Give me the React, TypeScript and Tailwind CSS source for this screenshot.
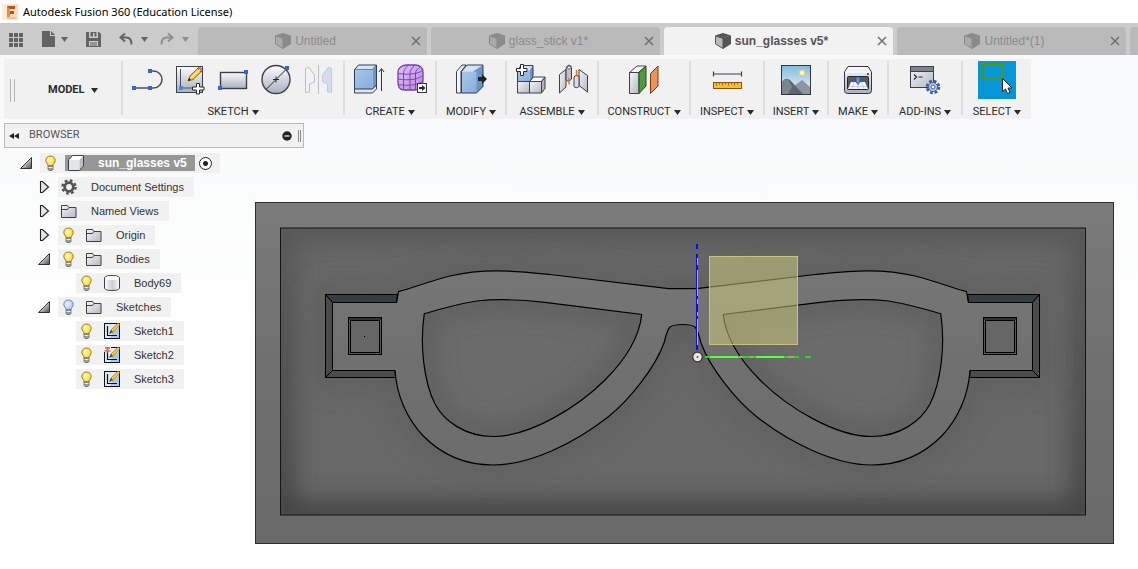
import React from 'react';
import clsx from 'clsx';

type IconProps = { children: React.ReactNode; size?: number; className?: string };

function Icon({ children, size = 32, className }: IconProps) {
  return (
    <svg
      width={size}
      height={size}
      viewBox={`0 0 ${size} ${size}`}
      fill="none"
      className={clsx('shrink-0', className)}
      aria-hidden="true"
    >
      {children}
    </svg>
  );
}

/* Gradients shared by the toolbar and tree icons */
function SharedDefs() {
  return (
    <svg width="0" height="0" className="absolute" aria-hidden="true">
      <defs>
        <linearGradient id="steel" x1="0" y1="0" x2="0" y2="1">
          <stop offset="0" stopColor="#fbfbfc" />
          <stop offset="1" stopColor="#a9b0bf" />
        </linearGradient>
        <linearGradient id="steelSide" x1="0" y1="0" x2="1" y2="1">
          <stop offset="0" stopColor="#f4f5f7" />
          <stop offset="1" stopColor="#b4b9c2" />
        </linearGradient>
        <linearGradient id="blueFace" x1="0" y1="0" x2="1" y2="1">
          <stop offset="0" stopColor="#a9c9ee" />
          <stop offset="1" stopColor="#86acd9" />
        </linearGradient>
        <linearGradient id="purple" x1="0" y1="0" x2="1" y2="1">
          <stop offset="0" stopColor="#e3c2f7" />
          <stop offset="1" stopColor="#b987e0" />
        </linearGradient>
        <linearGradient id="sky" x1="0" y1="0" x2="0" y2="1">
          <stop offset="0" stopColor="#84bbdc" />
          <stop offset="1" stopColor="#eef7fb" />
        </linearGradient>
        <linearGradient id="cylinder" x1="0" y1="0" x2="1" y2="0">
          <stop offset="0" stopColor="#ffffff" />
          <stop offset="0.55" stopColor="#c9ccd2" />
          <stop offset="1" stopColor="#ffffff" />
        </linearGradient>
        <linearGradient id="wedge" x1="0" y1="0" x2="1" y2="1">
          <stop offset="0.3" stopColor="#eeeeee" />
          <stop offset="1" stopColor="#4a4a4a" />
        </linearGradient>
        <radialGradient id="bulbOn" cx="0.4" cy="0.4" r="0.7">
          <stop offset="0" stopColor="#fffbc0" />
          <stop offset="1" stopColor="#f4d024" />
        </radialGradient>
        <radialGradient id="bulbOff" cx="0.4" cy="0.4" r="0.7">
          <stop offset="0" stopColor="#eef4ff" />
          <stop offset="1" stopColor="#9dbcf3" />
        </radialGradient>
      </defs>
    </svg>
  );
}

function Caret({ className }: { className?: string }) {
  return (
    <svg width="7" height="5" viewBox="0 0 7 5" className={clsx('shrink-0', className)} aria-hidden="true">
      <path d="M0 0h7L3.5 5z" fill="currentColor" />
    </svg>
  );
}

/* ---------- toolbar icons ---------- */

const Node = ({ x, y }: { x: number; y: number }) => (
  <rect x={x - 2} y={y - 2} width="4" height="4" fill="#2f66d0" />
);

const LineIcon = () => (
  <Icon>
    <path d="M19 7h3.500a8.500 8.500 0 0 1 0 17H3" stroke="#4b4f57" strokeWidth="1.500" />
    <Node x={19} y={7} />
    <Node x={3} y={24} />
    <Node x={19} y={24} />
  </Icon>
);

const NewSketchIcon = () => (
  <Icon>
    <rect x="2.500" y="2.500" width="26" height="26" fill="url(#steel)" stroke="#3c4048" />
    <path d="M6.500 5v19H22" stroke="#4b4f57" />
    <rect x="5" y="22" width="4" height="4" fill="#3f8af0" />
    <path d="M14 17l2-5L25 3l3.500 3.500L19 15.500z" fill="#f5c63b" stroke="#6b4a12" strokeWidth="0.800" />
    <path d="M23.500 4.500L25.500 2.500l3.500 3.500-2 2z" fill="#c98257" stroke="#6b4a12" strokeWidth="0.600" />
    <path d="M17 14L26 5.500" stroke="#fdeaa6" strokeWidth="1.200" />
    <path d="M14 17l1-3 2 2z" fill="#222" />
    <path d="M22.500 19.500h3v3.500H30v3h-4.500v4h-3v-4H18.500v-3h4z" fill="#fff" stroke="#26282c" />
  </Icon>
);

const RectangleIcon = () => (
  <Icon>
    <rect x="3.500" y="8.500" width="26" height="16" fill="url(#steel)" stroke="#3c4048" strokeWidth="1.400" />
    <Node x={29} y={8} />
    <Node x={3} y={24} />
  </Icon>
);

const CircleIcon = () => (
  <Icon>
    <circle cx="16" cy="15.500" r="14" fill="url(#steel)" stroke="#3c4048" strokeWidth="1.400" />
    <path d="M6 25.500L27 4.500M13 15.500h6M16 12.500v6" stroke="#26282c" />
    <Node x={27} y={4} />
  </Icon>
);

const MirrorIcon = () => (
  <Icon className="opacity-40">
    <path d="M2.500 4.500l3-1.500 6 8v7l-5 2v8l-4 .5z" fill="#f4f5f8" stroke="#6f7684" />
    <path d="M15.500 1v29" stroke="#6f7684" />
    <path d="M28.500 4.500l-3-1.500-6 8v7l5 2v8l4 .5z" fill="#a9c4ec" stroke="#8295b3" />
  </Icon>
);

const ExtrudeIcon = () => (
  <Icon>
    <path d="M1.500 24.500h18l4-4v4.500l-4 4h-18z" fill="#e2e4e8" stroke="#3c4048" />
    <path d="M1.500 5.500l4-4.500h18l-4 4.500z" fill="#d4e4f7" stroke="#2e3f58" />
    <path d="M19.500 5.500l4-4.500v20l-4 4z" fill="#6d94c4" />
    <path d="M1.500 5.500h18v19.500h-18z" fill="url(#blueFace)" />
    <path d="M1.500 5.500V25h18l4-4V1" stroke="#2e3f58" />
    <path d="M28.500 27V5M26 8l2.500-3.500L31 8" stroke="#33363b" />
  </Icon>
);

const FormIcon = () => (
  <Icon>
    <path d="M2 8c0-4 4-7 9-7h8c5 0 8 3 8 7v9c0 5-4 9-8 9H9c-5 0-7-3-7-7z" fill="url(#purple)" stroke="#6f3fae" strokeWidth="1.300" />
    <path
      d="M2 9.500c6 1 11 1 17 0 4-1 7-2 8-4M2 15c6 1 12 1 17 0 4-1 6-2 8-4M2 20.500c6 1 12 1 17 0 4-1 6-2 8-4M7.500 26V10c0-4 2-6 5-9M14 26V10c0-4 2-6 5-9M19.500 26V10c0-4 2-5 5-7"
      stroke="#7a46b5"
    />
    <rect x="21.500" y="19.500" width="9" height="9" fill="#fff" stroke="#33363b" />
    <path d="M23 23h3v-2l3.500 3-3.500 3v-2h-3z" fill="#26282c" />
  </Icon>
);

const PressPullIcon = () => (
  <Icon>
    <path d="M1.500 7.500L7 1h4L6 7.500v21.500H1.500z" fill="#f3f4f6" stroke="#3c4048" />
    <path d="M6.500 7.500L12 1h16l-5.500 6.500z" fill="#d4e4f7" />
    <path d="M18 7.500L28 1v21.500L21.500 29H18z" fill="#6d94c4" />
    <path d="M6.500 7.500h15V29h-15z" fill="url(#blueFace)" />
    <path d="M6.500 7.500L12 1h16v21.500L21.500 29h-15z" stroke="#2e3f58" />
    <path d="M23 13h4v-3l5 5-5 5v-3h-4z" fill="#222" />
  </Icon>
);

const NewComponentIcon = () => (
  <Icon>
    <path d="M2.500 6.500L6 1.500h12l-3.500 5z" fill="#d4e4f7" />
    <path d="M14.500 6.500l3.500-5v12l-3.500 4z" fill="#6d94c4" />
    <path d="M2.500 6.500h12v11h-12z" fill="url(#blueFace)" />
    <path d="M2.500 6.500L6 1.500h12v12l-3.500 4h-12z" stroke="#2e3f58" />
    <path d="M2.500 17.500h12v11.500h-12z" fill="url(#steelSide)" stroke="#3c4048" />
    <path d="M14.500 17.500l4-4.500H30l-3.500 4.500z" fill="#fafafa" stroke="#3c4048" />
    <path d="M26.500 17.500L30 13v11.500L26.500 29z" fill="#aeb3bd" stroke="#3c4048" />
    <path d="M14.500 17.500h12V29h-12z" fill="url(#steelSide)" stroke="#3c4048" />
    <path d="M5.500 0.500h3v4H12v3H8.500v4h-3v-4H1.500v-3h4z" fill="#fff" stroke="#26282c" />
  </Icon>
);

const JointIcon = () => (
  <Icon>
    <path d="M1.500 10.500L8 5.500V23l-6.500 6z" fill="url(#steelSide)" stroke="#3c4048" />
    <path d="M8 5.500c0-5 5-5.500 5.500-2V15c-1.500 2.500-4 2.500-5.500 1z" fill="#b9bec8" stroke="#3c4048" />
    <circle cx="11" cy="3.500" r="1.500" fill="#fff" stroke="#3c4048" strokeWidth="0.700" />
    <path d="M21 5.500l8.500 6V28L21 21.500z" fill="url(#steelSide)" stroke="#3c4048" />
    <path d="M16 13c1-2 4-2 5-.5v10c-1.500 1.500-4 1.500-5 0z" fill="#d9dce2" stroke="#3c4048" />
    <path d="M11 20.500V14M18.500 6v6.500" stroke="#f0701c" strokeWidth="1.400" />
  </Icon>
);

const PlaneIcon = () => (
  <Icon>
    <path d="M1.500 8.500L9 2h9l-7.500 6.500z" fill="#fafafa" stroke="#3c4048" />
    <path d="M1.500 8.500h9.500v21H1.500z" fill="url(#steelSide)" stroke="#3c4048" />
    <path d="M11 8.500L18 2v20l-7 7.500z" fill="#4f9a3f" stroke="#1f4d1a" />
    <path d="M22.500 9.500L30 2v20l-7.500 7.500z" fill="#e8935f" stroke="#83350c" />
  </Icon>
);

const MeasureIcon = () => (
  <Icon>
    <path d="M2.500 7.500v5M30.500 7.500v5M2.500 10h28" stroke="#3c4048" strokeWidth="1.200" />
    <rect x="2.500" y="18.500" width="28" height="6" fill="#f2c230" stroke="#8a5510" />
    <path d="M5.500 19v2.500M8.500 19v1.500M11.500 19v2.500M14.500 19v1.500M17.500 19v2.500M20.500 19v1.500M23.500 19v2.500M26.500 19v1.500" stroke="#8a5510" strokeWidth="0.800" />
  </Icon>
);

const PictureIcon = () => (
  <Icon>
    <rect x="1.500" y="1.500" width="29" height="29" fill="url(#sky)" stroke="#33363b" />
    <circle cx="22" cy="9" r="2.700" fill="#fffbe0" stroke="#f2cf6b" strokeWidth="1.200" />
    <path d="M14 22l8-6 8 7v7H14z" fill="#8e94a0" />
    <path d="M2 18c3-4 5-4 8-2l13 14H2z" fill="#5f6573" />
    <path d="M8 15l4 8-4 7H2V18c2-2 4-3 6-3z" fill="#7d8492" />
  </Icon>
);

const PrinterIcon = () => (
  <Icon>
    <path d="M2.500 8L6 2.500h20L29.500 8v18.500q0 3-3 3h-21q-3 0-3-3z" fill="url(#steel)" stroke="#33363b" />
    <path d="M3 8h26" stroke="#fff" />
    <rect x="25" y="9" width="2" height="2" fill="#128a2c" />
    <rect x="5.500" y="12.500" width="21" height="13" rx="1" fill="#555a64" stroke="#26282c" />
    <path d="M9 18h14l3 7H6z" fill="#f3f4f6" />
    <path d="M12 18l-2 7M16 20v5M20 18l2 7M7 22.500h18" stroke="#b9bdc6" strokeWidth="0.600" />
    <path d="M14 13h4v5l-2 2.500-2-2.500z" fill="#5a9be0" stroke="#1f4f91" strokeWidth="0.800" />
  </Icon>
);

const ScriptsIcon = () => (
  <Icon>
    <rect x="1.500" y="2.500" width="23" height="21" fill="url(#steelSide)" stroke="#3c4048" />
    <rect x="2" y="3" width="22" height="4" fill="#7c8492" />
    <path d="M2 7.500h22" stroke="#3c4048" />
    <path d="M5 10.500l2.500 2.500L5 15.500M9.500 13h4" stroke="#26282c" strokeWidth="1.200" />
    <circle cx="24" cy="23" r="5.500" stroke="#3f5f93" strokeWidth="3.500" strokeDasharray="2.600 1.720" />
    <circle cx="24" cy="23" r="4.500" fill="#b9cdeb" stroke="#3f5f93" />
    <circle cx="24" cy="23" r="2" fill="#fff" stroke="#3f5f93" />
  </Icon>
);

const SelectIcon = () => (
  <Icon size={38} className="bg-[#0696d7]">
    <rect x="4.500" y="3.500" width="20" height="14" stroke="#4e9a06" strokeWidth="1.500" />
    <path d="M24.500 17.500v13l3-2.500 2 4.500 2.500-1-2-4.500h4z" fill="#fff" stroke="#26282c" />
  </Icon>
);

/* ---------- header icons ---------- */

const GridIcon = () => (
  <Icon size={15}>
    <path d="M0 1h4v4H0zM5 1h4v4H5zM10 1h4v4h-4zM0 6h4v4H0zM5 6h4v4H5zM10 6h4v4h-4zM0 11h4v4H0zM5 11h4v4H5zM10 11h4v4h-4z" fill="#636363" />
  </Icon>
);

const FileIcon = () => (
  <Icon size={16}>
    <path d="M1 0h8v5h5v11H1z" fill="#636363" />
    <path d="M10 0l4 4h-4z" fill="#636363" />
  </Icon>
);

const SaveIcon = () => (
  <Icon size={15}>
    <path fillRule="evenodd" d="M0 0h3v6h9V0h1l2 2v13H0zM3 9v5h9V9z" fill="#636363" />
    <path d="M4.500 0h6v4.500h-2V1h-1.500v3.500H4.500zM4 10.500h7v1H4zM4 12.500h7v1H4z" fill="#636363" />
  </Icon>
);

const UndoIcon = ({ flip }: { flip?: boolean }) => (
  <Icon size={14} className={clsx(flip && '-scale-x-100')}>
    <path d="M6 1.500L1.500 5.500 6 9.500M2 5.500h5.500c3.500 0 5 2.500 5 7" stroke="currentColor" strokeWidth="2" />
  </Icon>
);

const CubeIcon = () => (
  <Icon size={16}>
    <path d="M0 2.500L8 0l8 2.500-8 2.800z" fill="currentColor" />
    <path d="M8 5l8-2.500V11l-8 5z" fill="currentColor" />
    <path d="M.5 3L8 5.500v10L.5 11z" fill="currentColor" fillOpacity="0.350" stroke="currentColor" />
  </Icon>
);

const FusionLogo = () => (
  <Icon size={16}>
    <rect width="16" height="16" fill="#fbdcc4" />
    <path d="M0 0h5v16H0z" fill="#fdebdc" />
    <path d="M5 13h9v2H5z" fill="#f6c39c" />
    <path d="M5 2h8v3H8v2h4v3H8v3H5z" fill="#b9531c" />
    <path d="M5 2l3 3v8H5z" fill="#ee8b42" />
  </Icon>
);

/* ---------- tree icons ---------- */

function Bulb({ off }: { off?: boolean }) {
  return (
    <svg width="11" height="16" viewBox="0 0 11 16" aria-hidden="true">
      <path
        d="M5.500 1c3 0 4.700 2 4.700 4.500C10.200 8 8 8.500 8 11H3C3 8.500.8 8 .8 5.500.8 3 2.500 1 5.500 1z"
        fill={off ? 'url(#bulbOff)' : 'url(#bulbOn)'}
        stroke={off ? '#6f87b8' : '#a67b12'}
      />
      <path d="M3 11h5v3.500l-1 1H4l-1-1z" fill="#9b9b9b" stroke="#5c5c5c" strokeWidth="0.700" />
      <path d="M3.500 12.500h4" stroke="#eee" />
    </svg>
  );
}

const FolderIcon = () => (
  <Icon size={16}>
    <path d="M.5 14.500v-12h6l1.500 2h7v10z" fill="url(#steelSide)" stroke="#3c4048" />
    <path d="M1 6.500h5.500l1.500-2" stroke="#3c4048" />
  </Icon>
);

const GearIcon = () => (
  <Icon size={16}>
    <circle cx="8" cy="8" r="6.500" stroke="#555" strokeWidth="2.500" strokeDasharray="2.700 2.405" />
    <circle cx="8" cy="8" r="4.300" stroke="#555" strokeWidth="2.800" />
  </Icon>
);

const BodyIcon = () => (
  <Icon size={16}>
    <path d="M.5 3C.5 1.500 3 .5 8 .5s7.500 1 7.500 2.500v10c0 1.500-2.500 2.500-7.500 2.500S.5 14.500.5 13z" fill="url(#cylinder)" stroke="#3c4048" />
    <ellipse cx="8" cy="3" rx="6.500" ry="2" fill="#fdfdfd" />
  </Icon>
);

const ComponentIcon = () => (
  <Icon size={16}>
    <path d="M.5 5L4.500.5h11V11l-4 4.500H.5z" fill="#fff" />
    <path d="M.5 5h11v10.500H.5z" fill="#e3e5e9" />
    <path d="M11.500 5l4-4.500V11l-4 4.500z" fill="#b8bcc4" />
    <path d="M.5 5L4.500.5h11V11l-4 4.500H.5z" stroke="#3c4048" />
  </Icon>
);

const SketchIcon = ({ pinned }: { pinned?: boolean }) => (
  <Icon size={16}>
    <rect x="0.500" y="0.500" width="15" height="15" fill="#dcebfa" stroke="#111" />
    <path d="M9 9l6-5v11H6z" fill="#a9c9ea" />
    <path d="M3.500 3v9.500H13" stroke="#111" strokeWidth="1.200" />
    <path d="M5.500 10.500L7 7l7-7 2 1.500L9 9.500z" fill="#f5c63b" stroke="#7a5714" strokeWidth="0.500" />
    <path d="M5.500 10.500L7 7l2 2z" fill="#444" />
    {pinned && (
      <>
        <path d="M0 0h7v5H0z" fill="#f1f1f1" />
        <path d="M1 .8h5M.5 4h6" stroke="#c23a1c" strokeWidth="1.200" />
        <path d="M2.500 1h2v3h-2z" fill="#e8694a" />
        <path d="M3.500 4.500V7" stroke="#8a2a14" />
      </>
    )}
  </Icon>
);

const TriangleOpen = () => (
  <Icon size={12}>
    <path d="M.5 11.500h11v-11z" fill="url(#wedge)" stroke="#222" strokeWidth="0.900" />
  </Icon>
);

const TriangleClosed = () => (
  <Icon size={12}>
    <path d="M2.500.5h2L10.500 6l-6 5.500h-2z" fill="#e4e4e4" stroke="#222" strokeWidth="1.100" />
  </Icon>
);

/* ---------- data ---------- */

const TABS = [
  { id: 1, title: 'Untitled' },
  { id: 2, title: 'glass_stick v1*' },
  { id: 3, title: 'sun_glasses v5*' },
  { id: 4, title: 'Untitled*(1)' },
];

const GROUPS = [
  {
    label: 'SKETCH',
    width: 'w-[220px]',
    tools: [
      { name: 'Line', icon: <LineIcon /> },
      { name: 'Create Sketch', icon: <NewSketchIcon /> },
      { name: 'Rectangle', icon: <RectangleIcon /> },
      { name: 'Circle', icon: <CircleIcon /> },
      { name: 'Mirror', icon: <MirrorIcon /> },
    ],
  },
  {
    label: 'CREATE',
    width: 'w-[90px]',
    tools: [
      { name: 'Extrude', icon: <ExtrudeIcon /> },
      { name: 'Create Form', icon: <FormIcon /> },
    ],
  },
  { label: 'MODIFY', width: 'w-[68px]', tools: [{ name: 'Press Pull', icon: <PressPullIcon /> }] },
  {
    label: 'ASSEMBLE',
    width: 'w-[90px]',
    tools: [
      { name: 'New Component', icon: <NewComponentIcon /> },
      { name: 'Joint', icon: <JointIcon /> },
    ],
  },
  { label: 'CONSTRUCT', width: 'w-[90px]', tools: [{ name: 'Offset Plane', icon: <PlaneIcon /> }] },
  { label: 'INSPECT', width: 'w-[72px]', tools: [{ name: 'Measure', icon: <MeasureIcon /> }] },
  { label: 'INSERT', width: 'w-[62px]', tools: [{ name: 'Attached Canvas', icon: <PictureIcon /> }] },
  { label: 'MAKE', width: 'w-[58px]', tools: [{ name: '3D Print', icon: <PrinterIcon /> }] },
  { label: 'ADD-INS', width: 'w-[72px]', tools: [{ name: 'Scripts and Add-Ins', icon: <ScriptsIcon /> }] },
  { label: 'SELECT', width: 'w-[68px]', tools: [{ name: 'Select', icon: <SelectIcon /> }] },
];

type TreeItem = {
  label: string;
  icon: React.ReactNode;
  bulb?: 'on' | 'off';
  state?: 'open' | 'closed';
  children?: TreeItem[];
};

const TREE: TreeItem[] = [
  { label: 'Document Settings', icon: <GearIcon />, state: 'closed' },
  { label: 'Named Views', icon: <FolderIcon />, state: 'closed' },
  { label: 'Origin', icon: <FolderIcon />, bulb: 'on', state: 'closed' },
  {
    label: 'Bodies',
    icon: <FolderIcon />,
    bulb: 'on',
    state: 'open',
    children: [{ label: 'Body69', icon: <BodyIcon />, bulb: 'on' }],
  },
  {
    label: 'Sketches',
    icon: <FolderIcon />,
    bulb: 'off',
    state: 'open',
    children: [
      { label: 'Sketch1', icon: <SketchIcon />, bulb: 'on' },
      { label: 'Sketch2', icon: <SketchIcon pinned />, bulb: 'on' },
      { label: 'Sketch3', icon: <SketchIcon />, bulb: 'on' },
    ],
  },
];

/* ---------- layout ---------- */

function Header() {
  const [active, setActive] = React.useState(3);

  return (
    <header>
      <div className="flex h-[23px] items-center gap-[5px] bg-white pl-0.5">
        <FusionLogo />
        <h1 className="font-['Noto_Sans',sans-serif] text-[11px] leading-4 text-black">
          Autodesk Fusion 360 (Education License)
        </h1>
      </div>
      <div className="flex h-8 items-stretch overflow-hidden bg-[#cbcbcb] text-[#636363]">
        <div className="flex w-[198px] shrink-0 items-center pl-[9px]">
          <button aria-label="Show data panel" className="mr-[17px]">
            <GridIcon />
          </button>
          <button aria-label="File" className="mr-[18px] flex items-center gap-1">
            <FileIcon />
            <Caret />
          </button>
          <button aria-label="Save" className="mr-[18px]">
            <SaveIcon />
          </button>
          <button aria-label="Undo" className="mr-3 flex items-center gap-2">
            <UndoIcon />
            <Caret />
          </button>
          <button aria-label="Redo" className="flex items-center gap-2 text-[#8f8f8f]">
            <UndoIcon flip />
            <Caret />
          </button>
        </div>
        <nav className="flex min-w-0 flex-1 gap-1 overflow-hidden pt-1">
          {TABS.map((tab) => (
            <div
              key={tab.id}
              className={clsx(
                'flex w-[229px] shrink-0 items-center rounded-t pl-0.5 text-[12px]',
                tab.id === active ? 'bg-[#f2f2f2] font-bold text-[#555]' : 'bg-[#bababa] text-[#8b8b8b]'
              )}
            >
              <button
                onClick={() => setActive(tab.id)}
                className="flex flex-1 items-center justify-center gap-1"
              >
                <CubeIcon />
                {tab.title}
              </button>
              <button aria-label={`Close ${tab.title}`} className="mr-1.5 text-[#6f6f6f]">
                <Icon size={10}>
                  <path d="M1 1l8 8M9 1L1 9" stroke="currentColor" strokeWidth="1.500" />
                </Icon>
              </button>
            </div>
          ))}
          <div className="w-[229px] shrink-0 rounded-t bg-[#bababa]" />
        </nav>
      </div>
    </header>
  );
}

function Toolbar() {
  return (
    <div className="flex h-[60px] w-max bg-[#f1f1f1] pt-0.5 font-['Roboto',sans-serif] text-[11px] text-[#2b2b2b]">
      <div className="flex w-[117px] items-center pl-1.5">
        <span className="h-[23px] w-[5px] border-x border-[#b4b4b4]" />
        <label className="ml-[33px] flex items-center gap-[3px] font-bold">
          <select aria-label="Workspace" className="w-10 appearance-none bg-transparent">
            <option>MODEL</option>
            <option>PATCH</option>
            <option>SCULPT</option>
          </select>
          <Caret />
        </label>
      </div>
      {GROUPS.map((group) => (
        <React.Fragment key={group.label}>
          <span className="h-[54px] w-0.5 bg-[#dedede]" />
          <div className={clsx('flex flex-col items-center', group.width)}>
            <div className="flex h-[38px] shrink-0 items-center gap-[11px]">
              {group.tools.map((tool) => (
                <button key={tool.name} aria-label={tool.name}>
                  {tool.icon}
                </button>
              ))}
            </div>
            <button className="mt-1.5 flex h-3.5 items-center gap-[3px]">
              {group.label}
              <Caret />
            </button>
          </div>
        </React.Fragment>
      ))}
    </div>
  );
}

function TreeNode({ item }: { item: TreeItem }) {
  return (
    <li>
      <div className="flex h-6 items-center gap-2">
        {item.state ? (
          <button aria-label={`Toggle ${item.label}`}>
            {item.state === 'open' ? <TriangleOpen /> : <TriangleClosed />}
          </button>
        ) : (
          <span className="w-3" />
        )}
        <div className="flex h-5 items-center bg-[#f1f1f1] pr-2.5 pl-[3px]">
          {item.bulb && (
            <button aria-label={`Show or hide ${item.label}`} className="mr-3 ml-0.5">
              <Bulb off={item.bulb === 'off'} />
            </button>
          )}
          {item.icon}
          <span className="ml-3.5">{item.label}</span>
        </div>
      </div>
      {item.children && (
        <ul className="pl-[18px]">
          {item.children.map((child) => (
            <TreeNode key={child.label} item={child} />
          ))}
        </ul>
      )}
    </li>
  );
}

function Browser() {
  return (
    <aside className="w-[300px] text-[11px] text-[#333]">
      <div className="flex h-[25px] items-center border border-[#b9b9b9] bg-[#f1f1f1] pr-0.5 pl-1">
        <button aria-label="Collapse browser" className="mr-2.5">
          <svg width="10" height="6" viewBox="0 0 10 6" aria-hidden="true">
            <path d="M5 0v6L0 3zM10 0v6L5 3z" fill="#222" />
          </svg>
        </button>
        <h2 className="flex-1 font-['Roboto',sans-serif] text-[#555]">BROWSER</h2>
        <button aria-label="Hide browser">
          <Icon size={10}>
            <circle cx="5" cy="5" r="4.700" fill="#222" />
            <path d="M2.500 5h5" stroke="#fff" strokeWidth="1.200" />
          </Icon>
        </button>
        <span className="ml-1.5 h-3 w-[3px] border-x border-[#8a8a8a]" />
      </div>
      <ul className="mt-[3px] pl-4">
        <li>
          <div className="flex h-6 items-center gap-2">
            <button aria-label="Toggle sun_glasses v5">
              <TriangleOpen />
            </button>
            <div className="flex h-5 items-center bg-[#f1f1f1] pr-2 pl-[5px]">
              <button aria-label="Show or hide sun_glasses v5" className="mr-[9px]">
                <Bulb />
              </button>
              <div className="flex h-4 items-center bg-[#979797] pr-2 pl-[3px]">
                <ComponentIcon />
                <label htmlFor="activate" className="ml-3.5 text-[12px] leading-4 font-bold text-white">
                  sun_glasses v5
                </label>
              </div>
              <input
                id="activate"
                type="radio"
                defaultChecked
                className="ml-1 size-[13px] appearance-none rounded-full border border-[#222] bg-white bg-[radial-gradient(circle,#222_0_2px,transparent_3px)]"
              />
            </div>
          </div>
          <ul className="pl-[18px]">
            {TREE.map((item) => (
              <TreeNode key={item.label} item={item} />
            ))}
          </ul>
        </li>
      </ul>
    </aside>
  );
}

/* Left half of the frame; the right half is the same drawing mirrored about x = 682.5 */
const FRAME_TOP = 'M396.500 302.500L398.500 291.700C415 287 432 280.500 450 276C468 271.500 483 270.800 497 270.800C515 270.800 535 273 550 274.500L668.500 288.700H683';
const FRAME_BOTTOM = 'M395 370.500C396.500 394 406 418 423.300 436C441 454 465 465 493.300 465C530 465 575 443 608 417C629 400.500 655 368 664 343C666 336 667 330 670 327C673 325 678 324.500 683 324.500';
const FRAME_FILL =
  'M325.500 294.500H398L398.500 291.700C415 287 432 280.500 450 276C468 271.500 483 270.800 497 270.800C515 270.800 535 273 550 274.500L668.500 288.700H683V324.500C678 324.500 673 325 670 327C667 330 666 336 664 343C655 368 629 400.500 608 417C575 443 530 465 493.300 465C465 465 441 454 423.300 436C406 418 398 398 395.500 377.500H325.500Z';
const LENS =
  'M424.300 313.700C440 309 458 304 476.700 301C495 299 520 299.500 545 302.300L641.700 314.500C639 340 624 361 605 380C578 407 530 436.500 493.300 436.500C465 436.500 444 421 435 404C424 382 419.500 345 424.300 313.700Z';

function FrameHalf() {
  return (
    <>
      <path d={FRAME_FILL} fill="url(#face)" />
      <path d={LENS} fill="#6b6b6b" />
      <g clipPath="url(#lensClip)">
        <path d={LENS} fill="none" stroke="#565656" strokeWidth="20" strokeOpacity="0.650" filter="url(#soft)" />
      </g>
      <g stroke="#000" fill="none">
        <path d="M325.500 294.500H397.500L396.500 302.500H332.500Z" fill="#343d42" />
        <path d="M325.500 294.500L332.500 302.500V370.500L325.500 377.500Z" fill="#4a4a48" />
        <path d="M325.500 377.500L332.500 370.500H395L395.500 377.500Z" fill="#4b4b49" />
        <rect x="348.500" y="317.500" width="33" height="37" fill="#5a5a5a" />
        <path d="M349 318h32v2h-32z" fill="#303030" stroke="none" />
        <rect x="350.500" y="320.500" width="29" height="32" fill="#666" />
        <path d={FRAME_TOP} strokeWidth="1.200" />
        <path d={FRAME_BOTTOM} strokeWidth="1.200" />
        <path d={LENS} strokeWidth="1.200" />
      </g>
    </>
  );
}

function Viewport() {
  return (
    <svg viewBox="255 202 859 342" className="block h-auto w-full" role="img" aria-label="Sunglasses mould, top view">
      <defs>
        <linearGradient id="face" gradientUnits="userSpaceOnUse" x1="0" y1="202" x2="0" y2="544">
          <stop offset="0" stopColor="#7b7b7b" />
          <stop offset="0.450" stopColor="#707070" />
          <stop offset="1" stopColor="#6a6a6a" />
        </linearGradient>
        <linearGradient id="pocketEdge" gradientUnits="userSpaceOnUse" x1="0" y1="228" x2="0" y2="515">
          <stop offset="0" stopColor="#555555" />
          <stop offset="1" stopColor="#404040" />
        </linearGradient>
        <filter id="soft" filterUnits="userSpaceOnUse" x="255" y="202" width="859" height="342">
          <feGaussianBlur stdDeviation="13" />
        </filter>
        <clipPath id="pocketClip">
          <rect x="280" y="228" width="806" height="287" />
        </clipPath>
        <clipPath id="lensClip">
          <path d={LENS} />
        </clipPath>
      </defs>
      <rect x="255.500" y="202.500" width="858" height="341" fill="url(#face)" stroke="#2d2d2d" />
      <g clipPath="url(#pocketClip)">
        <rect x="280" y="228" width="806" height="287" fill="#686868" />
        <rect x="280" y="228" width="806" height="287" fill="none" stroke="url(#pocketEdge)" strokeWidth="26" filter="url(#soft)" />
        <g stroke="#585858" strokeWidth="22" fill="none" strokeOpacity="0.600" filter="url(#soft)">
          <path d={FRAME_FILL} />
          <path d={FRAME_FILL} transform="matrix(-1 0 0 1 1365 0)" />
        </g>
      </g>
      <rect x="280.500" y="228" width="805" height="287" fill="none" stroke="#151515" />
      <FrameHalf />
      <g transform="matrix(-1 0 0 1 1365 0)">
        <FrameHalf />
      </g>
      <rect x="364" y="336" width="1" height="1" fill="#000" />

      <rect x="709.500" y="256.500" width="88" height="88" fill="#d4d27e" fillOpacity="0.500" stroke="#c5c183" />
      <path d="M697 244v5M697 254v96" stroke="#0a0af0" strokeWidth="2" />
      <path d="M697.500 258v7M697.500 270v26M697.500 299v5M697.500 312v4M697.500 319v26" stroke="#b9b4d0" />
      <path d="M705 357h94M805 357h6" stroke="#16e016" strokeWidth="2" />
      <path d="M710 357h28M756 357h28" stroke="#5cff3c" strokeWidth="2" />
      <path d="M739 357h4M750 357h4M788 357h6" stroke="#b89a80" strokeWidth="2" />
      <circle cx="697.500" cy="357" r="4.800" fill="#e9e9e9" stroke="#3b3535" strokeWidth="1.300" />
      <circle cx="697.500" cy="357" r="1" fill="#e02020" />
    </svg>
  );
}

export default function App() {
  return (
    <div className="flex min-h-screen flex-col font-['Liberation_Sans',Arial,sans-serif]">
      <SharedDefs />
      <Header />
      <main className="grid flex-1 bg-linear-to-b from-[#f7f9fa] to-white to-60%">
        <section className="col-start-1 row-start-1 pt-[147px] pr-6 pb-6 pl-[255px]">
          <Viewport />
        </section>
        <div className="z-10 col-start-1 row-start-1 flex flex-col gap-1 justify-self-start pt-1 pl-1">
          <Toolbar />
          <Browser />
        </div>
      </main>
    </div>
  );
}
